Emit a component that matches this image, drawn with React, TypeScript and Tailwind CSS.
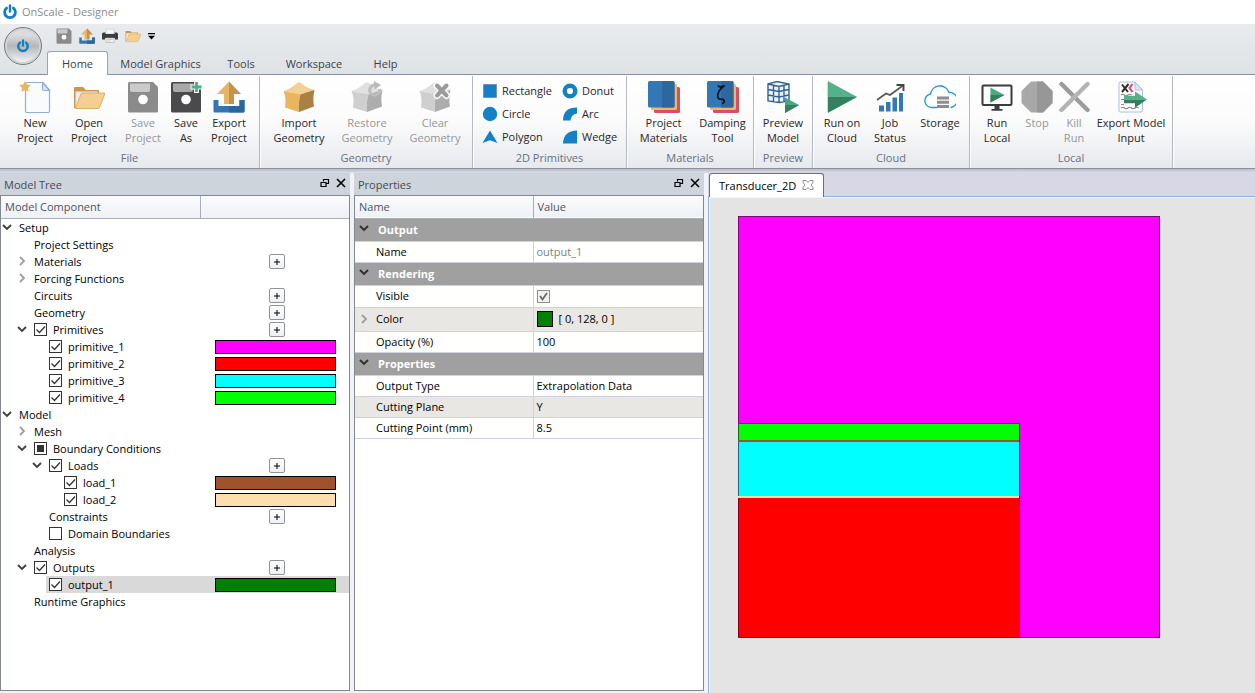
import React, { useState } from 'react';
import clsx from 'clsx';

/* ---------- icons ---------- */

const PowerIcon = ({ className }: { className?: string }) => (
  <svg viewBox="0 0 16 16" className={className} fill="none" stroke="#1080c4" strokeLinecap="round">
    <path d="M4.600 4.100a5.400 5.400 0 1 0 6.800 0" strokeWidth="2.8" />
    <path d="M8 1.400v6.200" strokeWidth="2.4" />
  </svg>
);

const FloppyIcon = ({ dark, plus, className = 'size-8' }: { dark?: boolean; plus?: boolean; className?: string }) => (
  <svg viewBox="0 0 32 32" className={className}>
    <path d="M2.5 1H26l5 5v24a1.5 1.5 0 0 1-1.5 1.5h-27A1.5 1.5 0 0 1 1 30V2.5A1.5 1.5 0 0 1 2.5 1z" fill={dark ? '#4a4a4c' : '#8b8b8b'} />
    <path d="M3 2.5h20V9a2 2 0 0 1-2 2H5a2 2 0 0 1-2-2z" fill={dark ? '#a9a9a9' : '#cacaca'} />
    <circle cx="16" cy="18.5" r="4.8" fill="#fff" />
    {plus && (
      <>
        <path d="M26.5 0v12M20.500 6h12" stroke="#f7f7f7" strokeWidth="5" />
        <path d="M26.5 1v10M21.500 6h10" stroke="#4fae86" strokeWidth="2.8" />
      </>
    )}
  </svg>
);

const NewIcon = () => (
  <svg viewBox="0 0 32 32" className="size-8">
    <path d="M8.5 1.5H24l6.5 7.5v21a1.5 1.5 0 0 1-1.5 1.5H8A1.5 1.5 0 0 1 6.5 30V3.5a2 2 0 0 1 2-2z" fill="#fafbfd" stroke="#8fb0dc" strokeWidth="1.2" />
    <path d="M23.5 1.5V8A1.5 1.5 0 0 0 25 9.5h5.5z" fill="#dbe5f3" stroke="#8fb0dc" strokeWidth="1.2" />
    <path d="M6 0l1.900 3.500 3.900.6-2.800 2.800.6 3.900L6 9.100l-3.600 1.700.6-3.900L.2 4.100l3.900-.6z" fill="#e9b562" />
  </svg>
);

const FolderIcon = ({ className = 'size-8' }: { className?: string }) => (
  <svg viewBox="0 0 32 32" className={className}>
    <path d="M1 7a1 1 0 0 1 1-1h8l3 3h12a1 1 0 0 1 1 1v3H7L2 27H1z" fill="#c9984a" />
    <path d="M2.5 10.500h22V14H8L3.500 25h-1z" fill="#ececec" />
    <path d="M8.5 12h23.300q.2 0 0 .8L26.500 26.500q-.4 1-1.400 1H2.200z" fill="#f5cf91" stroke="#d9a85c" strokeWidth=".9" />
  </svg>
);

const ExportIcon = ({ className = 'size-8' }: { className?: string }) => (
  <svg viewBox="0 0 32 32" className={className}>
    <path d="M.5 19h5v6h21v-6h5v11q0 1.500-1.500 1.500H2Q.5 31.500.5 30z" fill="#3376b3" />
    <path d="M16 25h10.500v-6h5v11q0 1.500-1.500 1.500H16z" fill="#2b669c" />
    <path d="M16 .5L28 13h-7v10h-5z" fill="#c3924b" />
    <path d="M16 .5L4 13h7v10h5z" fill="#e8b564" />
  </svg>
);

const PrinterIcon = () => (
  <svg viewBox="0 0 16 16" className="size-4">
    <path d="M4 1h8v5H4z" fill="#f6f6f6" stroke="#c8c8c8" strokeWidth=".6" />
    <path d="M1.500 4.500h2V6h9V4.500h2A1.500 1.500 0 0 1 16 6v5.500h-3V10H3v1.500H0V6a1.500 1.500 0 0 1 1.500-1.500z" fill="#3d3d40" />
    <path d="M4 10h8v4.500H4z" fill="#f3f3f3" stroke="#aaa" strokeWidth=".6" />
    <path d="M5.500 11.500h5M5.500 13h3" stroke="#bbb" strokeWidth=".7" />
  </svg>
);

const CubeIcon = ({ tone = 'gold', overlay }: { tone?: 'gold' | 'gray'; overlay?: 'restore' | 'clear' }) => {
  const [top, left, right] = tone === 'gold' ? ['#f3d093', '#e9b560', '#a98144'] : ['#e0e0e0', '#cfcfcf', '#adadad'];
  return (
    <svg viewBox="0 0 32 32" className="size-8">
      <path d="M.5 10Q9 7 14 2q2-1.500 4 0 5 5 13.500 7l-14 6z" fill={top} />
      <path d="M.5 10q9 2 17 3.500Q15 22 16 31L2 26.500Q3.500 17 .5 10z" fill={left} />
      <path d="M17.500 13.500Q25 11 31.500 9q-2 8-.5 16.500L16 31q-1-9 1.500-17.500z" fill={right} />
      {overlay === 'restore' && (
        <>
          <path d="M28.500 8a5 5 0 1 1-4-3.800" fill="none" stroke="#bdbdbd" strokeWidth="3" />
          <path d="M23 0l7 4-6.500 4.500z" fill="#b8b8b8" />
        </>
      )}
      {overlay === 'clear' && (
        <g strokeLinecap="round">
          <path d="M18 4.500l9.500 10M27.500 4.500l-9.500 10" stroke="#fbfbfb" strokeWidth="7" />
          <path d="M18 4.500l9.500 10M27.500 4.500l-9.500 10" stroke="#9b9b9b" strokeWidth="4" />
        </g>
      )}
    </svg>
  );
};

const MaterialsIcon = ({ zeta }: { zeta?: boolean }) => (
  <svg viewBox="0 0 32 32" className="size-8">
    <rect x="6" y="6" width="26" height="26" rx="1.5" fill="#d84e67" />
    <rect x="3" y="3" width="26" height="26" rx="1.5" fill="#efb765" />
    <rect x="0" y="0" width="26.5" height="26.5" rx="1.5" fill="#3377b4" />
    <path d="M14 0h11a1.500 1.500 0 0 1 1.500 1.500V25a1.500 1.500 0 0 1-1.500 1.500H14z" fill="#2c689f" />
    {zeta && (
      <path d="M11 4.500q.5 1.500 2.500 1.300 2-.4 4-1.300-6.500 4.500-6.800 10.500 0 3 3 3.200 3.600.1 3.600 2.200-.2 1.800-2.300 2.100" fill="none" stroke="#0c1420" strokeWidth="1.7" />
    )}
  </svg>
);

const PreviewIcon = () => (
  <svg viewBox="0 0 32 32" className="size-8" fill="none">
    <path d="M1 3l9-2.500L22 3v17l-12 1.500L1 20z" fill="#eef3f9" />
    <path d="M1 3l9-2.500L22 3v17l-10 1.500L1 20zM1 3l11 2.500L22 3M12 5.500v16M6.500 4.500v16M17 4.500v16M1 8.500l11 2 10-2M1 14l11 2 10-2" stroke="#2d6396" strokeWidth="1.4" />
    <path d="M18 16.500V32l14-8z" fill="#4aa97f" />
    <path d="M18 24h14l-14 8z" fill="#35805f" />
  </svg>
);

const PlayIcon = () => (
  <svg viewBox="0 0 32 32" className="size-8">
    <path d="M2 .5v31L30.500 16z" fill="#55b18a" stroke="#4c9b79" strokeWidth=".6" />
    <path d="M2 16h28.500L2 31.500z" fill="#357f60" />
  </svg>
);

const StatusIcon = () => (
  <svg viewBox="0 0 32 32" className="size-8">
    <path d="M5 24.500h5v6H5zM12 21h4.500v9.500H12zM18.500 16.500H23v14h-4.500zM25 12h4v18.500h-4z" fill="#3478b6" />
    <path d="M3 19l9-6.500 4 1.500L29 4.500" fill="none" stroke="#555" strokeWidth="1.6" />
    <path d="M22.500 4H29.500V10" fill="none" stroke="#444" strokeWidth="1.9" />
  </svg>
);

const CloudIcon = () => (
  <svg viewBox="0 0 32 32" className="size-8">
    <path d="M13 26.500H7.500a6.800 6.800 0 0 1-1-13.500A9.500 9.500 0 0 1 25 11.500a7.500 7.500 0 0 1 1.500 15" fill="#fbfdff" stroke="#2596d4" strokeWidth="1.3" />
    <path d="M13 15.500h12v3H13zM13 19.700h12v3H13zM13 24h12v3H13z" fill="#8d8d90" />
  </svg>
);

const MonitorIcon = () => (
  <svg viewBox="0 0 32 32" className="size-8">
    <rect x="1.5" y="4.5" width="29" height="19.5" rx="1" fill="#fdfdfd" stroke="#3b3b3b" strokeWidth="2" />
    <path d="M13.500 24h5v4h3v1.800h-11V28h3z" fill="#3b3b3b" />
    <path d="M9.500 6.500v15l14-7.500z" fill="#4aa97f" />
    <path d="M9.500 14h14l-14 7.500z" fill="#35805f" />
  </svg>
);

const StopIcon = () => (
  <svg viewBox="0 0 32 32" className="size-8">
    <path d="M10 .5h12l9.500 9.500v12L22 31.500H10L.5 22V10z" fill="#a8a8a8" />
    <path d="M16 .5h6l9.500 9.500v12L22 31.500h-6z" fill="#979797" />
  </svg>
);

const KillIcon = () => (
  <svg viewBox="0 0 32 32" className="size-8" fill="none" strokeLinecap="round" strokeWidth="4.4">
    <path d="M3.500 3l26 26" stroke="#9c9c9c" />
    <path d="M29.500 3l-26 26" stroke="#b3b3b3" />
  </svg>
);

const ExportModelIcon = () => (
  <svg viewBox="0 0 32 32" className="size-8">
    <path d="M5 1h15l7.500 8v20.500A1.500 1.500 0 0 1 26 31H5.500A1.500 1.500 0 0 1 4 29.500V2a1 1 0 0 1 1-1z" fill="#fdfdfe" stroke="#a9bfe0" />
    <path d="M20 1v6.500A1.500 1.500 0 0 0 21.500 9h6z" fill="#dbe5f3" stroke="#a9bfe0" />
    <path d="M7 3.500l6 7.500M13.500 3L7 11" stroke="#2d2d2d" strokeWidth="2" />
    <path d="M17.500 3l-3 4 3 4" stroke="#e2406b" strokeWidth="2" fill="none" />
    <path d="M6 14q2-1.500 3.500 0t3.500 0 3.500 0M6 18.500h3M6 23.500h3M6 27q2-1.500 3.500 0t3.500 0 3.500 0 3.500 0 3.500 0" stroke="#8a8a8a" strokeWidth="1.2" fill="none" />
    <path d="M9 18.500v-3.700h11V10.500l12 8z" fill="#55b18a" />
    <path d="M9 18.500h23l-12 8.200v-4.500H9z" fill="#357f60" />
  </svg>
);

const shapes: Record<string, React.ReactNode> = {
  Rectangle: <path d="M1.500 1.500h13v13h-13z" stroke="#6f86b0" strokeWidth=".8" />,
  Circle: <circle cx="8" cy="8" r="7.2" />,
  Polygon: <path d="M8 1.500L15.500 14 8 11.300.5 14z" />,
  Donut: <circle cx="8" cy="8" r="5.3" fill="none" stroke="#1480c6" strokeWidth="4.4" />,
  Arc: <path d="M1 14.500Q1 1.500 15 1.500v6q-6 1-6.500 7z" />,
  Wedge: <path d="M1 14.500Q1.500 2 15 1.500v13z" />,
};

/* ---------- ribbon ---------- */

interface RibbonButtonProps {
  label: [string, string?];
  icon: React.ReactNode;
  width: string;
  disabled?: boolean;
}

const RibbonButton = ({ label, icon, width, disabled }: RibbonButtonProps) => (
  <button
    disabled={disabled}
    className={clsx('flex shrink-0 flex-col items-center leading-[15px]', width, disabled ? 'text-[#969696]' : 'text-[#262626]')}
  >
    <span className="mb-0.5 flex justify-center">{icon}</span>
    <span>{label[0]}</span>
    {label[1] && <span>{label[1]}</span>}
  </button>
);

const RibbonGroup = ({ title, width, pad, children }: { title: string; width: string; pad: string; children: React.ReactNode }) => (
  <section aria-label={title} className={clsx('flex shrink-0 flex-col justify-between border-r border-[#b4b9c3] shadow-[1px_0_0_#fff]', width)}>
    <div className={clsx('flex pt-[5px]', pad)}>{children}</div>
    <h2 className="pb-0.5 text-center leading-4 text-[#68707f]">{title}</h2>
  </section>
);

const RIBBON_TABS = [
  { name: 'Home', width: 'w-[61px]' },
  { name: 'Model Graphics', width: 'w-[105px]' },
  { name: 'Tools', width: 'w-14' },
  { name: 'Workspace', width: 'w-[90px]' },
  { name: 'Help', width: 'w-[53px]' },
];

const Ribbon = () => (
  <div className="flex h-[94px] border-b border-[#8b8f98] bg-linear-to-b from-white via-[#fbfbfc] to-[#e6e9ed] pt-px">
    <RibbonGroup title="File" width="w-[260px]" pad="pl-2">
      <RibbonButton width="w-[54px]" label={['New', 'Project']} icon={<NewIcon />} />
      <RibbonButton width="w-[54px]" label={['Open', 'Project']} icon={<FolderIcon />} />
      <RibbonButton width="w-[54px]" label={['Save', 'Project']} icon={<FloppyIcon />} disabled />
      <RibbonButton width="w-8" label={['Save', 'As']} icon={<FloppyIcon dark plus />} />
      <RibbonButton width="w-[54px]" label={['Export', 'Project']} icon={<ExportIcon />} />
    </RibbonGroup>
    <RibbonGroup title="Geometry" width="w-[213px]" pad="pl-[5px]">
      <RibbonButton width="w-[68px]" label={['Import', 'Geometry']} icon={<CubeIcon />} />
      <RibbonButton width="w-[68px]" label={['Restore', 'Geometry']} icon={<CubeIcon tone="gray" overlay="restore" />} disabled />
      <RibbonButton width="w-[68px]" label={['Clear', 'Geometry']} icon={<CubeIcon tone="gray" overlay="clear" />} disabled />
    </RibbonGroup>
    <RibbonGroup title="2D Primitives" width="w-[154px]" pad="pl-[9px]">
      <div className="grid grid-cols-[80px_64px]">
        {['Rectangle', 'Donut', 'Circle', 'Arc', 'Polygon', 'Wedge'].map((name) => (
          <button key={name} className="flex h-[23px] items-center gap-1 pb-1 text-[#262626]">
            <svg viewBox="0 0 16 16" className="size-4 shrink-0" fill="#1480c6">
              {shapes[name]}
            </svg>
            {name}
          </button>
        ))}
      </div>
    </RibbonGroup>
    <RibbonGroup title="Materials" width="w-[127px]" pad="pl-[7px]">
      <RibbonButton width="w-[59px]" label={['Project', 'Materials']} icon={<MaterialsIcon />} />
      <RibbonButton width="w-[59px]" label={['Damping', 'Tool']} icon={<MaterialsIcon zeta />} />
    </RibbonGroup>
    <RibbonGroup title="Preview" width="w-[59px]" pad="justify-center">
      <RibbonButton width="w-14" label={['Preview', 'Model']} icon={<PreviewIcon />} />
    </RibbonGroup>
    <RibbonGroup title="Cloud" width="w-[157px]" pad="pl-[5px]">
      <RibbonButton width="w-12" label={['Run on', 'Cloud']} icon={<PlayIcon />} />
      <RibbonButton width="w-12" label={['Job', 'Status']} icon={<StatusIcon />} />
      <RibbonButton width="w-[52px]" label={['Storage']} icon={<CloudIcon />} />
    </RibbonGroup>
    <RibbonGroup title="Local" width="w-[203px]" pad="pl-[7px]">
      <RibbonButton width="w-10" label={['Run', 'Local']} icon={<MonitorIcon />} />
      <RibbonButton width="w-10" label={['Stop']} icon={<StopIcon />} disabled />
      <RibbonButton width="w-[34px]" label={['Kill', 'Run']} icon={<KillIcon />} disabled />
      <RibbonButton width="w-20" label={['Export Model', 'Input']} icon={<ExportModelIcon />} />
    </RibbonGroup>
  </div>
);

/* ---------- docks ---------- */

const Chevron = ({ open, bold }: { open?: boolean; bold?: boolean }) => (
  <svg viewBox="0 0 10 10" className="size-2.5" fill="none" strokeWidth="1.9">
    {open ? <path d="M1 3l4 4 4-4" stroke={bold ? '#2f2f2f' : '#404040'} /> : <path d="M3 1l4 4-4 4" stroke="#a0a0a0" />}
  </svg>
);

const Dock = ({ title, children }: { title: string; children: React.ReactNode }) => (
  <section className="mb-0.5 flex w-[350px] shrink-0 flex-col">
    <header className="flex h-[22px] items-center justify-between bg-[#cdd4dc] pl-1 pr-1 text-[#454b55]">
      <h2 className="pt-px">{title}</h2>
      <div className="flex gap-1.5 pb-0.5 text-black">
        <button aria-label="Float">
          <svg viewBox="0 0 10 10" className="size-2.5" fill="none" stroke="currentColor" strokeWidth="1.2">
            <path d="M3.500 3.500v-2h5v4h-2M1 4.500h5v4H1zM3 1.500h6M1 4.500h5" />
          </svg>
        </button>
        <button aria-label="Close">
          <svg viewBox="0 0 10 10" className="size-2.5" fill="none" stroke="currentColor" strokeWidth="1.6">
            <path d="M1 1l8 8M9 1L1 9" />
          </svg>
        </button>
      </div>
    </header>
    <div className="flex-1 border border-[#828790] bg-white">{children}</div>
  </section>
);

type Check = 'on' | 'off' | 'partial';

interface TreeItem {
  label: string;
  depth: number;
  arrow?: 'open' | 'closed';
  check?: Check;
  add?: boolean;
  color?: string;
  selected?: boolean;
}

const TREE: TreeItem[] = [
  { label: 'Setup', depth: 0, arrow: 'open' },
  { label: 'Project Settings', depth: 1 },
  { label: 'Materials', depth: 1, arrow: 'closed', add: true },
  { label: 'Forcing Functions', depth: 1, arrow: 'closed' },
  { label: 'Circuits', depth: 1, add: true },
  { label: 'Geometry', depth: 1, add: true },
  { label: 'Primitives', depth: 1, arrow: 'open', check: 'on', add: true },
  { label: 'primitive_1', depth: 2, check: 'on', color: 'bg-[#ff00ff]' },
  { label: 'primitive_2', depth: 2, check: 'on', color: 'bg-[#ff0000]' },
  { label: 'primitive_3', depth: 2, check: 'on', color: 'bg-[#00ffff]' },
  { label: 'primitive_4', depth: 2, check: 'on', color: 'bg-[#00ff00]' },
  { label: 'Model', depth: 0, arrow: 'open' },
  { label: 'Mesh', depth: 1, arrow: 'closed' },
  { label: 'Boundary Conditions', depth: 1, arrow: 'open', check: 'partial' },
  { label: 'Loads', depth: 2, arrow: 'open', check: 'on', add: true },
  { label: 'load_1', depth: 3, check: 'on', color: 'bg-[#a0522d]' },
  { label: 'load_2', depth: 3, check: 'on', color: 'bg-[#ffdead]' },
  { label: 'Constraints', depth: 2, add: true },
  { label: 'Domain Boundaries', depth: 2, check: 'off' },
  { label: 'Analysis', depth: 1 },
  { label: 'Outputs', depth: 1, arrow: 'open', check: 'on', add: true },
  { label: 'output_1', depth: 2, check: 'on', color: 'bg-[#008000]', selected: true },
  { label: 'Runtime Graphics', depth: 1 },
];

const INDENT = ['pl-0', 'pl-[15px]', 'pl-[30px]', 'pl-[45px]'];

const TreeCheckbox = ({ value, id }: { value: Check; id: string }) => {
  const [state, setState] = useState<Check>(value);
  return (
    <span className="relative mr-1.5 size-[13px] shrink-0">
      <input
        id={id}
        type="checkbox"
        checked={state === 'on'}
        onChange={(e) => setState(e.target.checked ? 'on' : 'off')}
        className="block size-[13px] appearance-none border border-[#333] bg-white"
      />
      {state === 'on' && (
        <svg viewBox="0 0 13 13" className="pointer-events-none absolute inset-0 size-[13px]" fill="none" stroke="#333" strokeWidth="1.3">
          <path d="M2.500 6.500l3 3 5.500-6" />
        </svg>
      )}
      {state === 'partial' && <span className="pointer-events-none absolute inset-[3px] bg-[#333]" />}
    </span>
  );
};

const TreeRow = ({ item }: { item: TreeItem }) => (
  <li className={clsx('flex h-[17px]', INDENT[item.depth])}>
    <span className="flex w-[15px] shrink-0 items-center pb-0.5 pl-px">
      {item.arrow && (
        <button aria-label={`Toggle ${item.label}`}>
          <Chevron open={item.arrow === 'open'} />
        </button>
      )}
    </span>
    <div className={clsx('flex flex-1 items-center justify-between pl-[3px]', item.selected && 'bg-[#d9d9d9]')}>
      {item.check ? (
        <div className="flex items-center">
          <TreeCheckbox value={item.check} id={item.label} />
          <label htmlFor={item.label}>{item.label}</label>
        </div>
      ) : (
        <span>{item.label}</span>
      )}
      <div className="flex w-[147px] justify-center">
        {item.add && (
          <button
            aria-label={`Add to ${item.label}`}
            className="ml-0.5 flex h-[15px] w-4 items-center justify-center rounded-[2px] border border-[#8f949c] bg-linear-to-b from-white to-[#eef0f4]"
          >
            <svg viewBox="0 0 6 6" className="size-1.5" stroke="#000" strokeWidth="1">
              <path d="M0 3h6M3 0v6" />
            </svg>
          </button>
        )}
        {item.color && <span className={clsx('mt-px h-3.5 w-[121px] border border-black', item.color)} />}
      </div>
    </div>
  </li>
);

const ModelTree = () => (
  <Dock title="Model Tree">
    <div className="flex h-[23px] items-center border-b border-[#a9b0ba] bg-linear-to-b from-[#fbfcfd] to-[#eef1f5] text-[#4c5360]">
      <span className="flex h-full w-[200px] items-center border-r border-[#a9b0ba] pl-1">Model Component</span>
    </div>
    <ul className="text-black">
      {TREE.map((item) => (
        <TreeRow key={item.label} item={item} />
      ))}
    </ul>
  </Dock>
);

interface PropertyRowProps {
  name: string;
  height: string;
  shaded?: boolean;
  expandable?: boolean;
  children: React.ReactNode;
}

const PropertyRow = ({ name, height, shaded, expandable, children }: PropertyRowProps) => (
  <tr className={clsx('border-b border-[#cfd1dc]', height, shaded ? 'bg-[#e8e7e3]' : 'bg-[#fffffe]')}>
    <th scope="row" className="border-r border-[#cfd1dc] p-0 text-left font-normal text-black">
      <div className="flex items-center">
        <span className="flex w-[21px] pl-1">{expandable && <Chevron />}</span>
        {name}
      </div>
    </th>
    <td className="p-0 pl-[3px] text-black">{children}</td>
  </tr>
);

const PropertySection = ({ title }: { title: string }) => (
  <tr className="h-[23px] border-b border-[#cfd1dc] bg-[#a0a0a0] text-white">
    <th colSpan={2} className="p-0 text-left font-bold">
      <div className="flex items-center">
        <span className="flex w-[23px] pb-1 pl-1">
          <Chevron open bold />
        </span>
        {title}
      </div>
    </th>
  </tr>
);

const Properties = () => (
  <Dock title="Properties">
    <table className="w-full table-fixed border-collapse">
      <thead>
        <tr className="h-[22px] border-b border-[#a9b0ba] bg-linear-to-b from-[#fbfcfd] to-[#eef1f5] text-left text-[#4c5360]">
          <th className="w-[178px] border-r border-[#a9b0ba] p-0 pl-1 font-normal">Name</th>
          <th className="p-0 pl-1 font-normal">Value</th>
        </tr>
      </thead>
      <tbody>
        <PropertySection title="Output" />
        <PropertyRow name="Name" height="h-[21px]">
          <span className="text-[#808080]">output_1</span>
        </PropertyRow>
        <PropertySection title="Rendering" />
        <PropertyRow name="Visible" height="h-[22px]">
          <span className="relative block size-[13px]">
            <input type="checkbox" aria-label="Visible" defaultChecked disabled className="block size-[13px] appearance-none border border-[#8e8f8f] bg-[#f1f1f1]" />
            <svg viewBox="0 0 13 13" className="absolute inset-0 size-[13px]" fill="none" stroke="#6a6a6a" strokeWidth="1.8">
              <path d="M3 6l2.500 3.500L10 3" />
            </svg>
          </span>
        </PropertyRow>
        <PropertyRow name="Color" height="h-6" shaded expandable>
          <div className="flex items-center gap-1.5">
            <span className="size-4 border border-black bg-[#008000]" />
            [ 0, 128, 0 ]
          </div>
        </PropertyRow>
        <PropertyRow name="Opacity (%)" height="h-[21px]">100</PropertyRow>
        <PropertySection title="Properties" />
        <PropertyRow name="Output Type" height="h-[21px]">Extrapolation Data</PropertyRow>
        <PropertyRow name="Cutting Plane" height="h-[21px]" shaded>Y</PropertyRow>
        <PropertyRow name="Cutting Point (mm)" height="h-[21px]">8.5</PropertyRow>
      </tbody>
    </table>
  </Dock>
);

/* ---------- viewport ---------- */

// Cross section of the transducer, one unit per pixel
const TransducerView = () => (
  <svg viewBox="0 0 422 422" className="w-[422px] max-w-full" shapeRendering="crispEdges">
    <rect width="422" height="422" fill="#ff00ff" />
    <rect y="207" width="282" height="17" fill="#00ff00" />
    <rect y="226" width="282" height="54" fill="#00ffff" />
    <rect y="282" width="282" height="139" fill="#ff0000" />
    <path d="M.5 0v422M0 .5h422M421.500 0v422M0 421.500h422M0 207.500h282M281.500 207v215" stroke="#300030" strokeOpacity=".6" />
    <rect y="224" width="281" height="2" fill="#a0522d" />
    <rect y="280" width="281" height="2" fill="#ffdead" />
  </svg>
);

const Viewport = () => (
  <main className="flex min-w-0 flex-1 flex-col bg-[#d7d7e5]">
    <div className="flex h-[23px] pl-px">
      <div className="relative z-10 -mb-px flex w-[115px] items-center gap-1.5 rounded-t-[3px] border border-b-0 border-[#5f737f] bg-white pl-[9px] text-black">
        <span>Transducer_2D</span>
        <button aria-label="Close tab" className="pb-0.5">
          <svg viewBox="0 0 12 12" className="size-3" fill="none" stroke="#8c8c8c">
            <path d="M1 1.500h3l2 2 2-2h3v2L9 6l2 2.500v2H8l-2-2-2 2H1v-2L3 6 1 3.500z" />
          </svg>
        </button>
      </div>
    </div>
    <div className="flex-1 border-l border-t border-[#8fb4e8] bg-[#e4e4e4] pl-[29px] pt-[19px] shadow-[inset_1px_1px_0_#f4f6fa]">
      <TransducerView />
    </div>
  </main>
);

/* ---------- app ---------- */

export default function App() {
  const [activeTab, setActiveTab] = useState('Home');

  return (
    <div className="flex min-h-screen flex-col overflow-x-hidden bg-[#f0f2f5] font-['Open_Sans','Noto_Sans',sans-serif] text-[11px] leading-4">
      <header className="flex h-6 items-center gap-1 bg-white pl-0.5 text-[#8c8c8c]">
        <PowerIcon className="size-4" />
        <h1 className="text-[11px]">OnScale - Designer</h1>
      </header>

      <div className="flex h-[51px] border-b border-[#8792a0] bg-linear-to-b from-[#e9ebee] to-[#dfe3e6]">
        <div className="w-[47px] shrink-0 pl-1 pt-[3px]">
          <button
            aria-label="Application menu"
            className="flex size-[38px] items-center justify-center rounded-full border border-[#77797d] bg-linear-to-b from-[#dcdcde] from-20% via-[#b4b6b8] via-50% to-[#fafafa] shadow-[inset_0_0_0_2px_#d2d3d5]"
          >
            <PowerIcon className="size-3.5" />
          </button>
        </div>
        <div className="flex flex-col justify-between">
          <div className="flex items-center gap-[7px] pl-[9px] pt-1">
            <button aria-label="Save"><FloppyIcon className="size-4" /></button>
            <button aria-label="Export"><ExportIcon className="size-4" /></button>
            <button aria-label="Print"><PrinterIcon /></button>
            <button aria-label="Open"><FolderIcon className="size-4" /></button>
            <button aria-label="Customize toolbar">
              <svg viewBox="0 0 7 7" className="size-[7px]">
                <path d="M0 0h7v1.200H0zM0 2.800h7L3.500 6.500z" />
              </svg>
            </button>
          </div>
          <nav className="-mb-px flex">
            {RIBBON_TABS.map((tab) => (
              <button
                key={tab.name}
                onClick={() => setActiveTab(tab.name)}
                className={clsx(
                  'h-6 border-x border-t pt-px text-center text-[#3b3f46]',
                  tab.width,
                  activeTab === tab.name ? 'rounded-t-[3px] border-[#9aa3ae] bg-white' : 'border-transparent',
                )}
              >
                {tab.name}
              </button>
            ))}
          </nav>
        </div>
      </div>

      <Ribbon />
      <div className="h-1 bg-linear-to-b from-[#b9bcc8] to-[#dcdde8]" />

      <div className="flex flex-1 gap-1">
        <ModelTree />
        <Properties />
        <Viewport />
      </div>
    </div>
  );
}
